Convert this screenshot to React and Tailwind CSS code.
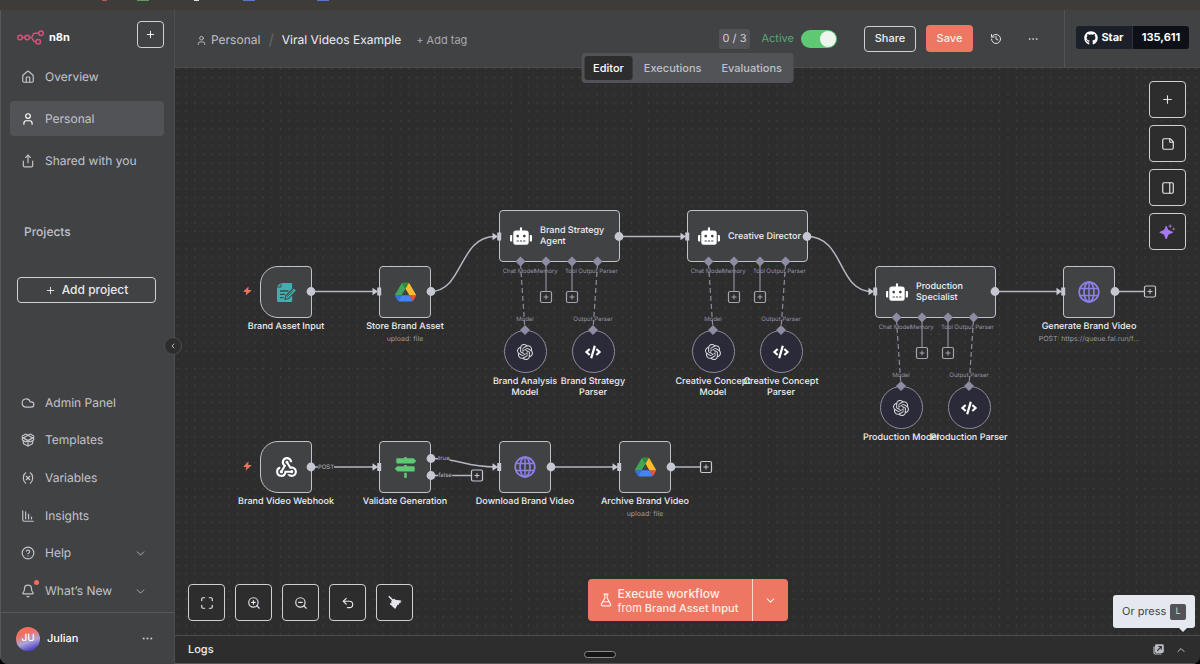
import React from "react";
import {
  House, User, Share, Cloud, PackageOpen, Variable, ChartColumnDecreasing, CircleHelp, Bell,
  ChevronDown, ChevronLeft, ChevronUp, Plus, StickyNote, PanelRight, Maximize, ZoomIn, ZoomOut,
  Undo2, History, Ellipsis, FlaskConical,
} from "lucide-react";
import { FaRobot, FaCode, FaMapSigns, FaGithub } from "react-icons/fa";
import { SiOpenai } from "react-icons/si";
import { MdWebhook } from "react-icons/md";

function Logo() {
  return (
    <svg width="27" height="15" viewBox="0 0 27 15" fill="none" stroke="#d8507a" strokeWidth="1.5" aria-hidden="true">
      <circle cx="3" cy="7.5" r="2.3" />
      <circle cx="10.2" cy="7.5" r="2.3" />
      <circle cx="24" cy="3.2" r="2.3" />
      <circle cx="21.2" cy="11.8" r="2.3" />
      <path d="M5.3 7.5h2.6M12.5 7.5h1.3c1.8 0 1.7-1.2 2-2.4.3-1.300 1-1.900 2.200-1.900h3.700M13.800 7.500c2.600 0 1.800 4.300 4 4.300h1.100" />
    </svg>
  );
}

function DriveIcon() {
  return (
    <svg width="21" height="20" viewBox="0 0 87.3 78" aria-hidden="true">
      <path d="m6.6 66.85 3.85 6.65c.8 1.4 1.95 2.5 3.3 3.3l13.75-23.8h-27.5c0 1.55.4 3.1 1.2 4.5z" fill="#3a6fe0" />
      <path d="m43.65 25-13.75-23.8c-1.35.8-2.5 1.9-3.3 3.3l-25.4 44a9.06 9.06 0 0 0 -1.2 4.5h27.5z" fill="#3fa757" />
      <path d="m73.55 76.8c1.35-.8 2.5-1.900 3.300-3.300l1.600-2.750 7.650-13.250c.8-1.400 1.200-2.950 1.200-4.500h-27.502l5.852 11.500z" fill="#ea4f3f" />
      <path d="m43.65 25 13.75-23.8c-1.35-.8-2.9-1.2-4.5-1.2h-18.5c-1.6 0-3.15.45-4.5 1.2z" fill="#2f8a3c" />
      <path d="m59.8 53h-32.3l-13.75 23.8c1.35.8 2.9 1.2 4.5 1.2h50.8c1.6 0 3.15-.45 4.5-1.2z" fill="#4584f3" />
      <path d="m73.4 26.5-12.7-22c-.8-1.4-1.95-2.5-3.3-3.3l-13.75 23.8 16.15 28h27.45c0-1.55-.4-3.1-1.2-4.5z" fill="#fabd2e" />
    </svg>
  );
}

function FormIcon() {
  return (
    <svg width="21" height="21" viewBox="0 0 21 21" aria-hidden="true">
      <path d="M5.500 1H15a1.200 1.200 0 0 1 1.200 1.200V18.800A1.200 1.200 0 0 1 15 20H2.200A1.200 1.200 0 0 1 1 18.800V5.500h3.300a1.200 1.200 0 0 0 1.200-1.200z" fill="#3fb0b0" />
      <path d="M1 4.600 4.600 1v2.700a.9.9 0 0 1-.9.9z" fill="#3fb0b0" />
      <path d="M4 9h8.500M4 12.300h5M4 15.600h3.500" stroke="#41484a" strokeWidth="1.300" />
      <path d="M9 17.500l.8-3.600 8-8 2.700 2.700-8 8z" fill="#3fb0b0" stroke="#41484a" strokeWidth="1.100" />
      <path d="M11 14.800l6-6" stroke="#41484a" strokeWidth=".9" />
    </svg>
  );
}

function GlobeIcon() {
  return (
    <svg width="22" height="22" viewBox="0 0 22 22" fill="none" stroke="#8b80e8" strokeWidth="1.700" aria-hidden="true">
      <circle cx="11" cy="11" r="9.800" />
      <ellipse cx="11" cy="11" rx="5" ry="9.800" />
      <path d="M1.800 7.500h18.400M1.800 14.500h18.400M11 1.200v19.600" strokeWidth="1.500" />
    </svg>
  );
}

function BoltIcon() {
  return (
    <svg width="9" height="10" viewBox="0 0 9 10" fill="#f1705c" aria-hidden="true">
      <path d="M5.500 .4 .7 5.300c-.3.300-.1.700.3.700h2.300L2.700 9.600 8.200 4.700c.3-.3.1-.8-.3-.8H5.300z" />
    </svg>
  );
}

function BroomIcon() {
  return (
    <svg width="15" height="15" viewBox="0 0 15 15" fill="#e4e5ec" aria-hidden="true">
      <path d="M1.300 1.700 2.300.8l3.600 3.500 1.500-.6 1 1 5.500.8c.5.100.6.600.3.900l-.9.400.4 1.500-1.500-.2-.3 1.800-1.200-.3-2.200 3.800c-.2.400-.6.400-.9.100L3.100 9.300c-.3-.4-.3-.8.1-1l1.600-1.100-.7-1 .8-.8z" />
    </svg>
  );
}

function SparkleIcon() {
  return (
    <svg width="17" height="17" viewBox="0 0 17 17" aria-hidden="true">
      <path d="M7.200 3.200 9 7.300l4.800 2L9.200 11.200 7.200 16 5.200 11.200.8 9.300l4.600-2z" fill="#a577f2" stroke="#a577f2" strokeWidth="1" strokeLinejoin="round" />
      <path d="M11.200.8l.7 1.600 1.600.7-1.600.7-.7 1.600-.7-1.600-1.600-.7 1.600-.7z" fill="#8f6ad0" />
      <path d="M14.700 4.300l.5 1.200 1.200.5-1.200.5-.5 1.200-.5-1.200-1.200-.5 1.200-.5z" fill="#c07aa8" />
    </svg>
  );
}

function PopOutIcon() {
  return (
    <svg width="11" height="11" viewBox="0 0 11 11" fill="none" aria-hidden="true">
      <path d="M1 2.500v6.300A1.200 1.200 0 0 0 2.200 10h6.300" stroke="#b9bbc5" strokeWidth="1.200" />
      <rect x="2" y=".3" width="8.800" height="8.600" rx="1.400" fill="#b9bbc5" />
      <path d="M4.200 6.900 8.200 2.700M5.300 2.500h3v3" stroke="#2d2d2d" strokeWidth="1.200" />
    </svg>
  );
}

const topItems = [
  { label: "Overview", Icon: House },
  { label: "Personal", Icon: User, active: true },
  { label: "Shared with you", Icon: Share },
];

const bottomItems = [
  { label: "Admin Panel", Icon: Cloud },
  { label: "Templates", Icon: PackageOpen },
  { label: "Variables", Icon: Variable },
  { label: "Insights", Icon: ChartColumnDecreasing },
  { label: "Help", Icon: CircleHelp, menu: true },
  { label: "What’s New", Icon: Bell, menu: true, dot: true },
];

function Sidebar() {
  return (
    <aside className="relative flex w-[175px] shrink-0 flex-col border-r border-l border-r-[#4d4e51] border-l-[#57585b] bg-[#414244]">
      <div className="flex items-start justify-between pt-[11px] pr-[10px] pl-4">
        <a href="#home" className="flex h-8 items-center gap-[5px] text-[11px] font-bold text-white">
          <Logo />
          n8n
        </a>
        <button aria-label="Create" className="flex h-[27px] w-[27px] items-center justify-center rounded border border-[#cfd0d4] text-white">
          <Plus size={11} />
        </button>
      </div>
      <nav className="mt-[6px] flex flex-col gap-[7px] pr-[10px] pl-[9px]">
        {topItems.map(({ label, Icon, active }) => (
          <a key={label} href="#nav" className={`flex h-[35px] items-center gap-[10px] rounded pl-[11px] text-[12px] text-[#c3c4cc] ${active ? "bg-[#525356]" : ""}`}>
            <Icon size={14} className={active ? "text-white" : ""} />
            {label}
          </a>
        ))}
      </nav>
      <h2 className="mt-[44px] pl-[23px] text-[12px] leading-5 font-medium text-[#bfc0c8]">Projects</h2>
      <button className="mt-[35px] mr-[18px] ml-4 flex h-[26px] shrink-0 items-center justify-center gap-[6px] rounded border border-[#cfd0d4] text-[12px] font-medium text-[#e8e9ee]">
        <Plus size={11} />
        Add project
      </button>
      <nav className="mt-auto mb-[2px] grid h-[226px] grid-rows-6 pr-[27px] pl-[20px]">
        {bottomItems.map(({ label, Icon, menu, dot }) => (
          <a key={label} href="#nav" className="flex items-center gap-[10px] text-[12px] text-[#c3c4cc]">
            <span className="relative">
              <Icon size={14} />
              {dot && <span className="absolute -top-1 -right-1 h-[5px] w-[5px] rounded-full bg-[#f1705c]" />}
            </span>
            <span className="flex-1">{label}</span>
            {menu && <ChevronDown size={13} strokeWidth={1.5} />}
          </a>
        ))}
      </nav>
      <div className="flex h-[52px] items-center border-t border-[#57585b] pr-[20px] pl-[15px]">
        <span className="flex h-6 w-6 items-center justify-center rounded-full bg-[linear-gradient(160deg,#f0705f_30%,#a9a4d8_60%,#5548c8_85%)] text-[10px] font-medium text-white">JU</span>
        <span className="flex-1 pl-[7px] text-[11px] font-medium text-white">Julian</span>
        <button aria-label="User menu" className="text-[#c3c4cc]"><Ellipsis size={13} /></button>
      </div>
      <button aria-label="Collapse sidebar" className="absolute top-[327px] -right-2 z-20 flex h-[18px] w-[18px] items-center justify-center rounded-full border border-[#4d4e51] bg-[#2d2d2d] text-[#d0d1d6]">
        <ChevronLeft size={8} strokeWidth={2.5} />
      </button>
    </aside>
  );
}

function Header() {
  return (
    <header className="flex h-[58px] shrink-0 items-center border-b border-[#4c4d4f] bg-[#414244] pl-[21px]">
      <div className="flex items-center pt-[3px]">
        <a href="#personal" className="flex items-center gap-1 text-[12px] text-[#bfc0c8]">
          <User size={11} />
          Personal
        </a>
        <span className="px-2 text-[15px] text-[#66676a]">/</span>
        <h1 className="text-[12px] text-[#eeeff3]">Viral Videos Example</h1>
        <button className="ml-[15px] text-[11px] text-[#a6a7af]">+ Add tag</button>
      </div>
      <div className="ml-auto flex items-center">
        <span className="flex h-5 items-center rounded-[3px] bg-[#525356] px-1 text-[11px] text-[#d5d6db]">0 / 3</span>
        <label htmlFor="active" className="ml-[11px] text-[11px] text-[#56a873]">Active</label>
        <input
          id="active"
          type="checkbox"
          defaultChecked
          className="ml-[7px] h-[18px] w-[36px] appearance-none rounded-full bg-[#5fc873] p-px before:block before:h-4 before:w-4 before:rounded-full before:bg-[#eef5ef] checked:before:ml-auto"
        />
        <button className="ml-[27px] h-[26px] w-[52px] rounded border border-[#cfd0d4] text-[11px] font-medium text-[#eeeff3]">Share</button>
        <button className="ml-[10px] h-[27px] w-[47px] rounded bg-[#ee7763] text-[11px] font-medium text-[#ffeee6]">Save</button>
        <button aria-label="History" className="ml-[17px] text-[#e0e1e6]"><History size={12} /></button>
        <button aria-label="More" className="ml-[25px] text-[#c3c4cc]"><Ellipsis size={12} /></button>
      </div>
      <div className="ml-[25px] flex h-full w-[136px] items-center border-l border-[#525356] pb-[2px] pl-[11px]">
        <a href="#star" className="flex h-[23px] w-[113px] overflow-hidden rounded-[3px] text-[11px] font-bold text-white">
          <span className="flex w-[56px] items-center justify-center gap-[3px] bg-[#1b2029]">
            <FaGithub size={14} />
            Star
          </span>
          <span className="flex flex-1 items-center justify-center border-l border-[#30353d] bg-[#0d1117]">135,611</span>
        </a>
      </div>
    </header>
  );
}

/* Canvas contents, in canvas coordinates */
const squareNodes = [
  { x: 85, y: 198, label: "Brand Asset Input", icon: <FormIcon />, trigger: true },
  { x: 204, y: 198, label: "Store Brand Asset", sub: "upload: file", icon: <DriveIcon /> },
  { x: 888, y: 198, label: "Generate Brand Video", sub: "POST: https://queue.fal.run/f...", icon: <GlobeIcon /> },
  { x: 85, y: 373, label: "Brand Video Webhook", icon: <MdWebhook size={25} color="#fff" />, trigger: true },
  { x: 204, y: 373, label: "Validate Generation", icon: <FaMapSigns size={21} color="#5fc873" /> },
  { x: 324, y: 373, label: "Download Brand Video", icon: <GlobeIcon /> },
  { x: 444, y: 373, label: "Archive Brand Video", sub: "upload: file", icon: <DriveIcon /> },
];

const agents = [
  { x: 324, y: 142, label: "Brand Strategy Agent", model: "Brand Analysis Model", parser: "Brand Strategy Parser" },
  { x: 512, y: 142, label: "Creative Director", model: "Creative Concept Model", parser: "Creative Concept Parser" },
  { x: 700, y: 198, label: "Production Specialist", model: "Production Model", parser: "Production Parser" },
];

const edges = [
  "M136 223.500H201", "M256 223.500C288 223.500 284 168.500 320 168.500", "M444 168.500H509",
  "M632 168.500C670 168.500 662 223.500 697 223.500", "M820 223.500H885", "M940 223.500H970",
  "M136 399H201", "M256 390.500C286 390.500 288 399 321 399", "M256 407.500H296", "M376 399H441", "M496 399H525",
];
const inputs = [[204, 223.5], [324, 168.5], [512, 168.5], [700, 223.5], [888, 223.5], [204, 399], [324, 399], [444, 399]];
const outputs = [[136, 223.5], [256, 223.5], [444, 168.5], [632, 168.5], [820, 223.5], [940, 223.5], [136, 399], [256, 390.5], [256, 407.5], [376, 399], [496, 399]];
const plusSlots = [[975, 223.5], [302, 407.5], [531, 399]];

function Diamond({ x, y }) {
  return <path d={`M${x} ${y - 5}l5 5-5 5-5-5z`} fill="#8c8ca3" />;
}

function PlusSlot({ x, y, color = "#c5c7d2" }) {
  return (
    <g fill="#2d2d2d" stroke={color}>
      <rect x={x - 5.5} y={y - 5.5} width="11" height="11" rx="1.5" strokeWidth="1.200" />
      <path d={`M${x - 2.5} ${y}h5M${x} ${y - 2.5}v5`} />
    </g>
  );
}

function BackLines() {
  return (
    <svg className="absolute inset-0 h-full w-full" aria-hidden="true">
      <defs>
        <pattern id="dots" x="-1.600" y="5.200" width="8.560" height="8.560" patternUnits="userSpaceOnUse">
          <circle cx="4.280" cy="4.280" r=".6" fill="#49494b" />
        </pattern>
      </defs>
      <rect width="100%" height="100%" fill="url(#dots)" />
      {edges.map((d) => <path key={d} d={d} fill="none" stroke="#b4b6c1" strokeWidth="1.500" />)}
      {agents.map(({ x, y }) => (
        <g key={x} stroke="#8c8c9c" strokeWidth="1.200" fill="none">
          <path d={`M${x + 21.5} ${y + 54}L${x + 26} ${y + 120}M${x + 98.500} ${y + 54}L${x + 94} ${y + 120}`} strokeDasharray="5 3" />
          <path d={`M${x + 47} ${y + 54}V${y + 82}M${x + 73} ${y + 54}V${y + 82}`} />
        </g>
      ))}
    </svg>
  );
}

function FrontHandles() {
  return (
    <svg className="pointer-events-none absolute inset-0 h-full w-full" aria-hidden="true">
      {inputs.map(([x, y]) => (
        <g key={`${x}-${y}`} fill="#c5c7d2">
          <rect x={x - 1.8} y={y - 4} width="4" height="8" />
          <path d={`M${x - 6.500} ${y - 3.800}l5.500 3.800-5.500 3.800z`} />
        </g>
      ))}
      {outputs.map(([x, y]) => <circle key={`${x}-${y}`} cx={x} cy={y} r="4.400" fill="#c5c7d2" />)}
      {plusSlots.map(([x, y]) => <PlusSlot key={x} x={x} y={y} />)}
      {agents.map(({ x, y }) => (
        <g key={x}>
          {[21.5, 47, 73, 98.5].map((dx) => <Diamond key={dx} x={x + dx} y={y + 51.5} />)}
          <Diamond x={x + 26} y={y + 120} />
          <Diamond x={x + 94} y={y + 120} />
          <PlusSlot x={x + 47} y={y + 87} color="#a3a4b0" />
          <PlusSlot x={x + 73} y={y + 87} color="#a3a4b0" />
        </g>
      ))}
    </svg>
  );
}

function Tag({ x, y, children, solid }) {
  return (
    <span
      style={{ left: x, top: y }}
      className={`absolute -translate-x-1/2 -translate-y-1/2 text-[6px] leading-[9px] whitespace-nowrap ${solid ? "bg-[#2d2d2d] text-[#b4b5bf]" : "text-[#9494a8]"}`}
    >
      {children}
    </span>
  );
}

function SquareNode({ x, y, label, sub, icon, trigger }) {
  return (
    <div style={{ left: x, top: y }} className="absolute w-[52px]">
      {trigger && <span className="absolute top-[20px] -left-[17px]"><BoltIcon /></span>}
      <div className={`flex h-[52px] items-center justify-center border border-[#c0c2cc] bg-[#414244] ${trigger ? "rounded-l-[18px] rounded-r" : "rounded"}`}>
        {icon}
      </div>
      <div className="absolute top-[55px] left-1/2 -translate-x-1/2 text-center whitespace-nowrap">
        <p className="text-[9px] leading-3 font-medium text-[#eeeff3]">{label}</p>
        {sub && <p className="text-[7px] leading-[11px] text-[#9a9ba4]">{sub}</p>}
      </div>
    </div>
  );
}

function RoundNode({ x, y, label, icon }) {
  return (
    <div style={{ left: x, top: y }} className="absolute flex w-[82px] -translate-x-1/2 flex-col items-center">
      <div className="flex h-[43px] w-[43px] items-center justify-center rounded-full border border-[#8c8c9c] bg-[#2b2a38] text-white">{icon}</div>
      <p className={`mt-[3px] text-center text-[9px] leading-[11px] font-medium text-[#eeeff3] ${label.startsWith("Production") ? "whitespace-nowrap" : ""}`}>{label}</p>
    </div>
  );
}

function Agent({ x, y, label, model, parser }) {
  return (
    <>
      <div style={{ left: x, top: y }} className="absolute flex h-[52px] w-[121px] items-center gap-2 rounded border border-[#c0c2cc] bg-[#414244] pr-1 pl-[10px]">
        <FaRobot size={22} color="#fff" className="shrink-0" />
        <p className="text-[9px] leading-[11px] font-medium text-[#eeeff3]">{label}</p>
      </div>
      <Tag x={x + 20} y={y + 61}>Chat Model</Tag>
      <Tag x={x + 47} y={y + 61}>Memory</Tag>
      <Tag x={x + 72} y={y + 61}>Tool</Tag>
      <Tag x={x + 99} y={y + 61}>Output Parser</Tag>
      <Tag x={x + 26} y={y + 109}>Model</Tag>
      <Tag x={x + 94} y={y + 109}>Output Parser</Tag>
      <RoundNode x={x + 26} y={y + 120} label={model} icon={<SiOpenai size={16} color="#d5d6db" />} />
      <RoundNode x={x + 94} y={y + 120} label={parser} icon={<FaCode size={16} />} />
    </>
  );
}

const toolButton = "flex h-[37px] w-[37px] items-center justify-center rounded border border-[#cfd0d4] bg-[#2d2d2d] text-[#e4e5ec]";

function Canvas() {
  return (
    <section aria-label="Workflow canvas" className="relative min-h-0 flex-1 overflow-hidden bg-[#2d2d2d]">
      <BackLines />
      {squareNodes.map((n) => <SquareNode key={n.label} {...n} />)}
      {agents.map((a) => <Agent key={a.label} {...a} />)}
      <Tag x={151} y={399} solid>POST</Tag>
      <Tag x={269} y={390} solid>true</Tag>
      <Tag x={270} y={407} solid>false</Tag>
      <FrontHandles />

      <div className="absolute top-[13px] right-[14px] flex flex-col gap-[7px]">
        <button aria-label="Add node" className={toolButton}><Plus size={13} /></button>
        <button aria-label="Add sticky note" className={toolButton}><StickyNote size={14} /></button>
        <button aria-label="Toggle panel" className={toolButton}><PanelRight size={14} /></button>
        <button aria-label="Assistant" className={toolButton}><SparkleIcon /></button>
      </div>

      <div className="absolute bottom-[14px] left-[13px] flex gap-[10px]">
        <button aria-label="Fit view" className={toolButton}><Maximize size={14} /></button>
        <button aria-label="Zoom in" className={toolButton}><ZoomIn size={14} /></button>
        <button aria-label="Zoom out" className={toolButton}><ZoomOut size={14} /></button>
        <button aria-label="Undo" className={toolButton}><Undo2 size={14} /></button>
        <button aria-label="Tidy up" className={toolButton}><BroomIcon /></button>
      </div>

      <div className="absolute inset-x-0 bottom-[14px] flex justify-center">
        <div className="flex h-[42px] w-[200px] overflow-hidden rounded bg-[#ee7763] text-[#ffeee6]">
          <button className="flex flex-1 items-center gap-[5px] pl-[11px] text-left">
            <FlaskConical size={14} />
            <span className="flex flex-col">
              <span className="text-[12px] leading-[15px] font-medium">Execute workflow</span>
              <span className="text-[11px] leading-[14px]">from <b className="font-medium">Brand Asset Input</b></span>
            </span>
          </button>
          <button aria-label="Choose trigger" className="flex w-[36px] items-center justify-center border-l border-[#ffd9cc]">
            <ChevronDown size={13} />
          </button>
        </div>
      </div>
    </section>
  );
}

function Tabs() {
  return (
    <div className="absolute top-[43px] left-1/2 z-10 flex h-[30px] -translate-x-1/2 gap-[2px] rounded bg-[#525356] p-[3px] text-[11px] font-medium text-[#bfc0c8]">
      <button className="rounded-[3px] bg-[#2d2d2d] px-[9px] text-white">Editor</button>
      <button className="px-[9px]">Executions</button>
      <button className="px-[9px]">Evaluations</button>
    </div>
  );
}

export default function App() {
  return (
    <div className="bg-black">
      <div className="relative flex h-screen flex-col overflow-hidden rounded-b-[8px] bg-[#2d2d2d] font-['Inter',sans-serif] [text-rendering:geometricPrecision]">
        <div className="flex h-[10px] shrink-0 items-start bg-[#3d3c39]">
          <span className="ml-[102px] h-px w-[5px] bg-[#b35b5b]" />
          <span className="ml-[30px] h-px w-3 bg-[#5f9a63]" />
          <span className="ml-[45px] h-px w-[5px] bg-[#dddddd]" />
          <span className="ml-[44px] h-px w-3 bg-[#5a78c8]" />
          <span className="ml-[62px] h-px w-3 bg-[#5a78c8]" />
        </div>
        <div className="flex min-h-0 flex-1">
          <Sidebar />
          <main className="relative flex min-w-0 flex-1 flex-col">
            <Header />
            <Tabs />
            <Canvas />
            <footer className="flex h-[29px] shrink-0 items-center border-t border-b border-t-[#4c4d4f] border-b-[#57585b] bg-[#2d2d2d] pr-[13px] pl-[13px] text-[11px] font-medium text-[#eeeff3]">
              <span className="flex-1">Logs</span>
              <button aria-label="Pop out logs"><PopOutIcon /></button>
              <button aria-label="Open logs" className="ml-[11px] text-[#c3c4cc]"><ChevronUp size={12} /></button>
            </footer>
          </main>
        </div>
        <span className="absolute bottom-[6px] left-1/2 h-[7px] w-[32px] -translate-x-1/2 rounded-full border border-[#8a8b8e] bg-[#161616]" />
        <div role="tooltip" className="absolute right-[5px] bottom-[36px] flex h-[33px] w-[82px] items-center justify-between rounded-[3px] bg-[#e6e8ef] pr-[9px] pl-[9px] text-[11px] text-[#414244]">
          Or press
          <kbd className="flex h-4 w-4 items-center justify-center rounded-[2px] bg-[#525356] font-['Inter',sans-serif] text-[9px] text-[#d5d6db]">L</kbd>
          <svg className="absolute right-[7px] -bottom-1" width="10" height="5" viewBox="0 0 10 5" aria-hidden="true"><path d="M0 0h10L5 5z" fill="#e6e8ef" /></svg>
        </div>
      </div>
    </div>
  );
}
